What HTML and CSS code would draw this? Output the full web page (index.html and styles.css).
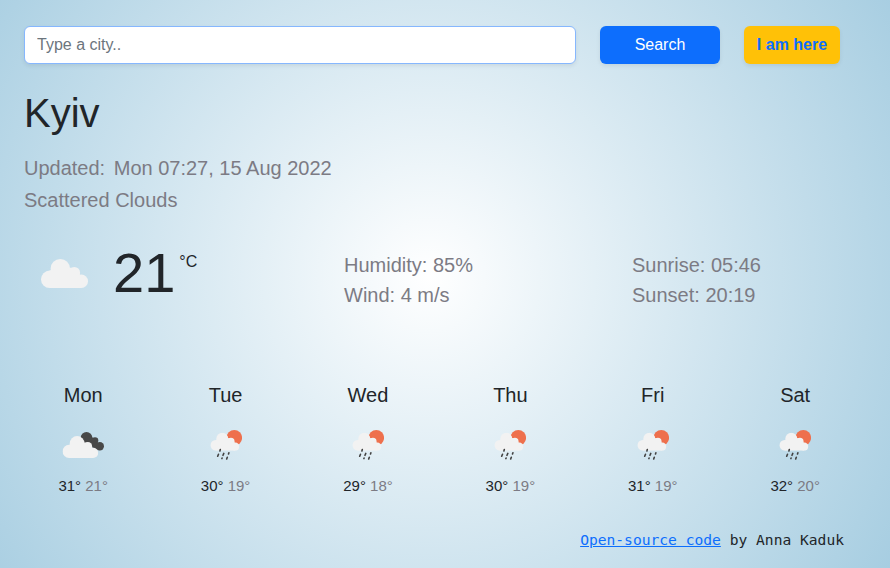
FILE: index.html
```
<!DOCTYPE html>
<html lang="en">
<head>
<meta charset="utf-8">
<title>Weather</title>
<link rel="stylesheet" href="styles.css">
</head>
<body>
<svg class="defs" aria-hidden="true">
  <symbol id="cloud" viewBox="0 0 47 29">
    <circle cx="8.700" cy="20.300" r="8.700"/>
    <circle cx="19.300" cy="9.700" r="9.700"/>
    <circle cx="33.300" cy="13.700" r="5.800"/>
    <circle cx="40.300" cy="22.300" r="6.700"/>
    <path d="M8.700 29V11.600L19 8L33 9L40.300 17V29Z"/>
  </symbol>
  <symbol id="rain" viewBox="0 0 32 32">
    <circle cx="24.300" cy="8.700" r="7.800" fill="#ee704d"/>
    <use href="#cloud" x=".4" y="3.800" width="29" height="17.900" fill="#f2f2f2"/>
    <path class="drops" d="M10.300 20.600l-.4 1.300M8.500 25.300l-.8 1.900M13.800 24.400l-.8 1.900M18.900 23.700l-.4 1.200M12.100 29l-.2.600M17.300 28.300l-.6 1.700"/>
  </symbol>
</svg>
<main class="app">
  <form class="search">
    <input class="field" type="text" placeholder="Type a city..">
    <button class="btn primary" type="button">Search</button>
    <button class="btn warning" type="button">I am here</button>
  </form>
  <h1 class="city">Kyiv</h1>
  <div class="info updated">Updated: <span class="date">Mon 07:27, 15 Aug 2022</span></div>
  <div class="info">Scattered Clouds</div>
  <section class="current">
    <div class="now"><svg class="now-icon"><use href="#cloud"/></svg><span class="temp">21</span><span class="unit">°C</span></div>
    <div class="details">Humidity: 85%<br>Wind: 4 m/s</div>
    <div class="details">Sunrise: 05:46<br>Sunset: 20:19</div>
  </section>
  <section class="forecast">
    <div class="day"><div class="name">Mon</div><svg class="icon" viewBox="0 0 48 32"><g class="dark"><circle cx="27.500" cy="9" r="5.900"/><circle cx="36" cy="11.600" r="3.300"/><circle cx="40.800" cy="17.300" r="4.200"/><path d="M27 6L37 10L42 20L38 21L26 14Z"/></g><use class="light" href="#cloud" x="3.500" y="7" width="35.700" height="22"/></svg><div class="range">31° <span>21°</span></div></div>
    <div class="day"><div class="name">Tue</div><svg class="icon small"><use href="#rain"/></svg><div class="range">30° <span>19°</span></div></div>
    <div class="day"><div class="name">Wed</div><svg class="icon small"><use href="#rain"/></svg><div class="range">29° <span>18°</span></div></div>
    <div class="day"><div class="name">Thu</div><svg class="icon small"><use href="#rain"/></svg><div class="range">30° <span>19°</span></div></div>
    <div class="day"><div class="name">Fri</div><svg class="icon small"><use href="#rain"/></svg><div class="range">31° <span>19°</span></div></div>
    <div class="day"><div class="name">Sat</div><svg class="icon small"><use href="#rain"/></svg><div class="range">32° <span>20°</span></div></div>
  </section>
  <footer class="credit"><a href="#">Open-source code</a> by Anna Kaduk</footer>
</main>
</body>
</html>
```
FILE: styles.css
```
* { box-sizing: border-box; }
body {
  margin: 0;
  height: 568px;
  overflow: hidden;
  font: 16px/24px "Liberation Sans", Arial, sans-serif;
  color: #212529;
  background: radial-gradient(circle at 429px 276px, #fff 0, #a6cde1 550px);
}
.defs { position: absolute; width: 0; height: 0; }
.app { padding: 26px 24px 0; }
.search { display: flex; gap: 24px; }
.field, .btn {
  height: 38px;
  border-radius: 6px;
  font: inherit;
  box-shadow: 0 2px 4px rgba(0, 0, 0, .075);
}
.field { width: 552px; padding: 6px 12px; border: 1px solid #86b7fe; background: #fff; outline: 0; }
.field::placeholder { color: #6c757d; opacity: 1; }
.btn { border: 0; padding: 0; }
.primary { width: 120px; background: #0d6efd; color: #fff; }
.warning { width: 96px; background: #ffc107; color: #0d6efd; font-weight: 700; }
.city { margin: 25px 0 0; font-size: 40px; line-height: 48px; font-weight: 400; }
.info { font-size: 20px; line-height: 30px; color: #7c7b84; }
.updated { margin: 16px 0 2px; }
.date { margin-left: 3px; }
.current { display: grid; grid-template-columns: 320px 288px 1fr; margin-top: 35px; height: 86px; }
.now { display: flex; padding-left: 17px; }
.now-icon { width: 47px; height: 29px; margin-top: 9px; fill: #f2f2f2; }
.temp { margin-left: 25px; font-size: 56px; line-height: 46px; }
.unit { margin-left: 4px; }
.details { font-size: 20px; line-height: 30px; color: #7c7b84; }
.forecast { display: flex; margin: 44px -12px 0; }
.day { width: 142.400px; flex-shrink: 0; text-align: center; }
.name { font-size: 20px; line-height: 30px; }
.icon { display: block; width: 48px; height: 32px; margin: 19px auto 13px; }
.icon.small { width: 32px; }
.drops { fill: none; stroke: #424242; stroke-width: 1.600; stroke-linecap: round; }
.dark { fill: #484848; }
.light { fill: #f2f2f2; }
.range { font-size: 15px; line-height: 24px; }
.range span { color: #7c7b84; }
.credit { margin: 30px 22px 0 0; text-align: right; font: 14.620px/24px "DejaVu Sans Mono", monospace; }
.credit a { color: #0d6efd; }
```
